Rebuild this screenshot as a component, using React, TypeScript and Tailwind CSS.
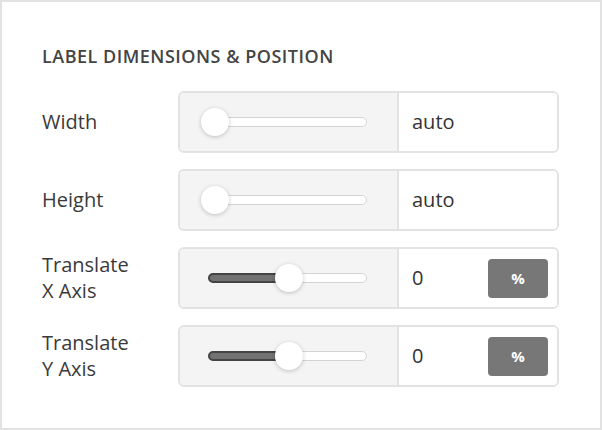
import React from 'react';

type Row = {
  label: string[];
  value: string;
  thumb: number; // thumb centre, px from track left
  fill: boolean;
  unit?: string;
};

const rows: Row[] = [
  { label: ['Width'], value: 'auto', thumb: 6, fill: false },
  { label: ['Height'], value: 'auto', thumb: 6, fill: false },
  { label: ['Translate', 'X Axis'], value: '0', thumb: 80, fill: true, unit: '%' },
  { label: ['Translate', 'Y Axis'], value: '0', thumb: 80, fill: true, unit: '%' },
];

function Slider({ thumb, fill }: { thumb: number; fill: boolean }) {
  return (
    <div className="relative h-[10px] w-[159px] rounded-full border border-[#d4d4d4] bg-white">
      {fill && (
        <div
          className="absolute -left-px -top-px h-[10px] rounded-full border-2 border-[#444] bg-[#727272]"
          style={{ width: thumb + 2 }}
        />
      )}
      <div
        className="absolute top-1/2 h-[28px] w-[28px] -translate-x-1/2 -translate-y-1/2 rounded-full bg-white shadow-[0_1px_4px_rgba(0,0,0,0.22)]"
        style={{ left: thumb }}
      />
    </div>
  );
}

export default function App() {
  return (
    <div
      className="h-[430px] w-[602px] border-2 border-[#e2e2e2] bg-white pl-[40px] pt-[42px] text-[#3a3a3a]"
      style={{ fontFamily: '"Open Sans", "Noto Sans", sans-serif' }}
    >
      <h2 className="text-[18px] font-semibold leading-[24px] tracking-[0.5px] text-[#444]">
        LABEL DIMENSIONS &amp; POSITION
      </h2>

      <div className="mt-[23px] flex flex-col gap-[16px]">
        {rows.map((row) => (
          <div key={row.label.join(' ')} className="flex items-center">
            <div className="w-[136px] text-[20px] leading-[26px] text-[#3a3a3a]">
              {row.label.map((l) => (
                <div key={l}>{l}</div>
              ))}
            </div>
            <div className="flex h-[62px] w-[381px] overflow-hidden rounded-[6px] border-2 border-[#e2e2e2]">
              <div className="flex w-[217px] items-center bg-[#f4f4f4] pl-[28px]">
                <Slider thumb={row.thumb} fill={row.fill} />
              </div>
              <div className="flex flex-1 items-center justify-between border-l-2 border-[#e2e2e2] bg-white pl-[13px] pr-[9px]">
                <span className="text-[20px] text-[#333]">{row.value}</span>
                {row.unit && (
                  <span className="flex h-[39px] w-[60px] items-center justify-center rounded-[4px] bg-[#777] text-[15px] font-bold text-white">
                    {row.unit}
                  </span>
                )}
              </div>
            </div>
          </div>
        ))}
      </div>
    </div>
  );
}
